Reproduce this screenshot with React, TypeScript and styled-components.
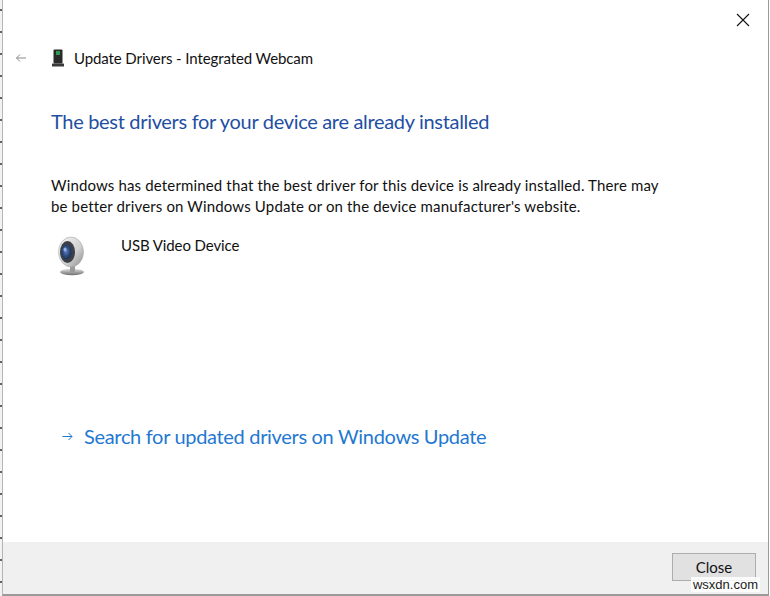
import React from "react";
import styled, { createGlobalStyle } from "styled-components";

const Global = createGlobalStyle`
  html, body { margin: 0; padding: 0; }
  body {
    width: 770px;
    height: 596px;
    overflow: hidden;
    background: #ffffff;
    font-family: "Lato", "Noto Sans", sans-serif;
  }
`;

const Screen = styled.div`
  display: flex;
  width: 770px;
  height: 596px;
`;

const BehindStrip = styled.div`
  width: 2px;
  flex: none;
  background: repeating-linear-gradient(
    to bottom,
    #f2f2f2 0px,
    #f2f2f2 9px,
    #6b6257 9px,
    #6b6257 11px,
    #f2f2f2 11px,
    #f2f2f2 22px
  );
`;

const Window = styled.div`
  flex: 1;
  display: flex;
  flex-direction: column;
  background: #ffffff;
  border-left: 1px solid #b5b5b5;
  border-right: 1px solid #9a9a9a;
  border-bottom: 2px solid #9a9a9a;
  margin-right: 1px;
  position: relative;
`;

const TitleBar = styled.div`
  height: 40px;
  display: flex;
  justify-content: flex-end;
  align-items: flex-start;
  padding-right: 12px;
`;

const CloseX = styled.button`
  width: 26px;
  height: 26px;
  margin-top: 7px;
  border: none;
  background: transparent;
  padding: 0;
  display: flex;
  align-items: center;
  justify-content: center;
`;

const HeaderRow = styled.div`
  display: flex;
  align-items: center;
  height: 36px;
  padding-left: 11px;
`;

const BackArrow = styled.span`
  width: 14px;
  display: flex;
  align-items: center;
  justify-content: center;
  margin-right: 24px;
`;

const Title = styled.span`
  font-size: 15px;
  color: #111;
  margin-left: 10px;
  letter-spacing: -0.1px;
`;

const Content = styled.div`
  padding-left: 48px;
  padding-right: 40px;
  display: flex;
  flex-direction: column;
`;

const Heading = styled.h1`
  margin: 31px 0 0 0;
  font-weight: 400;
  font-size: 20px;
  line-height: 28px;
  color: #1f4fa3;
  letter-spacing: -0.32px;
`;

const Body = styled.p`
  margin: 40px 0 0 0;
  font-size: 15px;
  line-height: 21px;
  color: #111;
  letter-spacing: 0.15px;
  max-width: 615px;
`;

const DeviceRow = styled.div`
  display: flex;
  align-items: flex-start;
  margin-top: 17px;
  padding-left: 4px;
`;

const DeviceName = styled.span`
  font-size: 15px;
  color: #111;
  margin-left: 34px;
  margin-top: 2px;
  letter-spacing: -0.1px;
`;

const LinkRow = styled.a`
  display: flex;
  align-items: center;
  margin-top: 148px;
  padding-left: 11px;
  color: #1f78d1;
  text-decoration: none;
  cursor: pointer;
`;

const LinkArrow = styled.span`
  width: 12px;
  display: flex;
  align-items: center;
  margin-right: 10px;
`;

const LinkText = styled.span`
  font-size: 20px;
  color: #1f78d1;
  letter-spacing: -0.32px;
`;

const Spacer = styled.div`
  flex: 1;
`;

const Footer = styled.div`
  height: 52px;
  background: #f0f0f0;
  display: flex;
  justify-content: flex-end;
  align-items: flex-start;
  padding: 11px 12px 0 0;
  box-sizing: border-box;
`;

const FooterButton = styled.button`
  width: 84px;
  height: 28px;
  background: #e1e1e1;
  border: 1px solid #adadad;
  font-family: "Lato", "Noto Sans", sans-serif;
  font-size: 15px;
  color: #111;
  padding: 0;
`;

const Watermark = styled.span`
  position: absolute;
  right: 8px;
  bottom: 2px;
  font-family: "Liberation Sans", Arial, sans-serif;
  font-size: 13px;
  color: #1a1a1a;
  background: rgba(255, 255, 255, 0.85);
  padding: 0 2px;
  line-height: 15px;
`;

const DeviceGlyph = () => (
  <svg width="12" height="18" viewBox="0 0 12 18">
    <rect x="1.5" y="0.5" width="9" height="14" rx="1" fill="#2a2a2a" />
    <rect x="4" y="2" width="4" height="4" fill="#2e9b55" />
    <rect x="0" y="14.5" width="12" height="3" rx="0.5" fill="#3a3a3a" />
  </svg>
);

const WebcamGlyph = () => (
  <svg width="32" height="42" viewBox="0 0 32 42">
    <defs>
      <linearGradient id="ring" x1="0" y1="0" x2="1" y2="1">
        <stop offset="0" stopColor="#f6f6f6" />
        <stop offset="0.6" stopColor="#cfcfcf" />
        <stop offset="1" stopColor="#8a8a8a" />
      </linearGradient>
      <radialGradient id="lens" cx="0.45" cy="0.45" r="0.6">
        <stop offset="0" stopColor="#5f86c4" />
        <stop offset="0.5" stopColor="#304e86" />
        <stop offset="1" stopColor="#1d2a44" />
      </radialGradient>
      <linearGradient id="base" x1="0" y1="0" x2="0" y2="1">
        <stop offset="0" stopColor="#e0e0e0" />
        <stop offset="1" stopColor="#6e6e6e" />
      </linearGradient>
    </defs>
    <ellipse cx="17" cy="38" rx="12" ry="3.2" fill="url(#base)" />
    <rect x="15" y="30" width="5" height="8" fill="#9a9a9a" />
    <ellipse cx="16" cy="18" rx="12.5" ry="15" fill="url(#ring)" stroke="#a8a8a8" strokeWidth="0.6" />
    <ellipse cx="12.5" cy="18" rx="7.5" ry="11" fill="#3c4048" />
    <ellipse cx="11.5" cy="18" rx="5" ry="7.5" fill="url(#lens)" />
    <ellipse cx="10" cy="15.5" rx="1.5" ry="2" fill="#a9c3ec" opacity="0.8" />
  </svg>
);

export default function App() {
  return (
    <>
      <Global />
      <Screen>
        <BehindStrip />
        <Window>
          <TitleBar>
            <CloseX aria-label="Close">
              <svg width="14" height="14" viewBox="0 0 14 14">
                <path d="M1 1 L13 13 M13 1 L1 13" stroke="#111" strokeWidth="1.1" fill="none" />
              </svg>
            </CloseX>
          </TitleBar>
          <HeaderRow>
            <BackArrow>
              <svg width="12" height="10" viewBox="0 0 12 10">
                <path d="M11 5 H1.5 M5 1.5 L1.5 5 L5 8.5" stroke="#8a8a8a" strokeWidth="1" fill="none" />
              </svg>
            </BackArrow>
            <DeviceGlyph />
            <Title>Update Drivers - Integrated Webcam</Title>
          </HeaderRow>
          <Content>
            <Heading>The best drivers for your device are already installed</Heading>
            <Body>
              Windows has determined that the best driver for this device is already installed. There may be
              better drivers on Windows Update or on the device manufacturer's website.
            </Body>
            <DeviceRow>
              <WebcamGlyph />
              <DeviceName>USB Video Device</DeviceName>
            </DeviceRow>
            <LinkRow>
              <LinkArrow>
                <svg width="11" height="9" viewBox="0 0 11 9">
                  <path d="M0.5 4.5 H10 M6.5 1 L10 4.5 L6.5 8" stroke="#1f78d1" strokeWidth="1" fill="none" />
                </svg>
              </LinkArrow>
              <LinkText>Search for updated drivers on Windows Update</LinkText>
            </LinkRow>
          </Content>
          <Spacer />
          <Footer>
            <FooterButton>Close</FooterButton>
          </Footer>
          <Watermark>wsxdn.com</Watermark>
        </Window>
      </Screen>
    </>
  );
}
